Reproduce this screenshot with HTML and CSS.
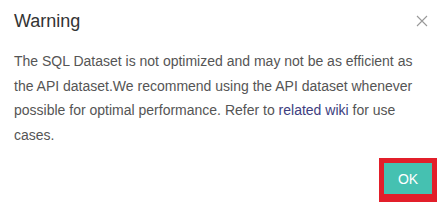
FILE: index.html
```html
<!DOCTYPE html>
<html>
<head>
<meta charset="utf-8">
<link rel="stylesheet" href="styles.css">
</head>
<body>
<div class="dialog">
  <div class="header">
    <div class="title">Warning</div>
    <div class="close">
      <svg width="12" height="12" viewBox="0 0 12 12"><path d="M1 1L11 11M11 1L1 11" stroke="#999" stroke-width="1.1" fill="none"/></svg>
    </div>
  </div>
  <div class="body">The SQL Dataset is not optimized and may not be as efficient as the API dataset.We recommend using the API dataset whenever possible for optimal performance. Refer to <a class="link">related wiki</a> for use cases.</div>
  <div class="footer">
    <div class="highlight"><button class="ok">OK</button></div>
  </div>
</div>
</body>
</html>
```
FILE: styles.css
```css
html, body { margin: 0; padding: 0; background: #fff; }
body { width: 446px; height: 204px; overflow: hidden; font-family: "Liberation Sans", Arial, sans-serif; }
.dialog { display: flex; flex-direction: column; padding: 0 14px 0 14px; }
.header { display: flex; justify-content: space-between; align-items: center; height: 42px; }
.title { font-size: 18px; color: #333; }
.close { display: flex; margin-right: 4px; }
.body { font-size: 14px; line-height: 24.5px; color: #555; margin-top: 7px; }
.link { color: #3d3d7e; }
.footer { display: flex; justify-content: flex-end; margin-top: 11px; margin-right: -5px; }
.highlight { border-style: solid; border-color: #e21f2a; border-width: 5px 5px 8px 5px; }
.ok { display: block; width: 48px; height: 31px; background: #45c1b1; color: #fff; border: none; font-family: "Liberation Sans", Arial, sans-serif; font-size: 14px; padding: 0; }
```
